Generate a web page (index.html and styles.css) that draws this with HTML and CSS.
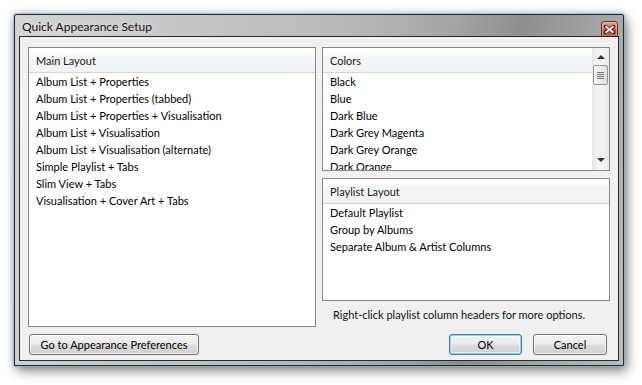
FILE: index.html
```html
<!DOCTYPE html>
<html>
<head>
<meta charset="utf-8">
<title>Quick Appearance Setup</title>
<link rel="stylesheet" href="styles.css">
</head>
<body>
<div class="window">
  <div class="titlebar">
    <span class="title">Quick Appearance Setup</span>
    <span class="close">
      <svg width="11" height="9" viewBox="0 0 11 9"><path d="M1 1 L10 8 M10 1 L1 8" stroke="#3a1a14" stroke-width="3.4" stroke-linecap="square"/><path d="M1.5 1.2 L9.5 7.8 M9.5 1.2 L1.5 7.8" stroke="#fff" stroke-width="1.8"/></svg>
    </span>
  </div>
  <div class="client">
    <div class="panel main">
      <div class="panel-head">Main Layout</div>
      <ul class="items">
        <li>Album List + Properties</li>
        <li>Album List + Properties (tabbed)</li>
        <li>Album List + Properties + Visualisation</li>
        <li>Album List + Visualisation</li>
        <li>Album List + Visualisation (alternate)</li>
        <li>Simple Playlist + Tabs</li>
        <li>Slim View + Tabs</li>
        <li>Visualisation + Cover Art + Tabs</li>
      </ul>
    </div>
    <div class="right">
      <div class="panel colors">
        <div class="panel-body">
          <div class="panel-head">Colors</div>
          <ul class="items">
            <li>Black</li>
            <li>Blue</li>
            <li>Dark Blue</li>
            <li>Dark Grey Magenta</li>
            <li>Dark Grey Orange</li>
            <li>Dark Orange</li>
          </ul>
        </div>
        <div class="scrollbar">
          <span class="arrow up"></span>
          <span class="thumb"><i></i><i></i><i></i><i></i></span>
          <span class="arrow down"></span>
        </div>
      </div>
      <div class="panel playlist">
        <div class="panel-head">Playlist Layout</div>
        <ul class="items">
          <li>Default Playlist</li>
          <li>Group by Albums</li>
          <li>Separate Album &amp; Artist Columns</li>
        </ul>
      </div>
      <p class="hint">Right-click playlist column headers for more options.</p>
    </div>
    <div class="footer-left">
      <button class="btn prefs">Go to Appearance Preferences</button>
    </div>
    <div class="footer-right">
      <button class="btn ok">OK</button>
      <button class="btn cancel">Cancel</button>
    </div>
  </div>
</div>
</body>
</html>
```
FILE: styles.css
```css
* { box-sizing: border-box; }
html, body { margin: 0; padding: 0; }
body {
  width: 642px;
  height: 385px;
  background: #fff;
  font-family: Lato, "Liberation Sans", sans-serif;
  font-size: 11px;
  color: #000;
  overflow: hidden;
}
.window {
  margin: 14px 0 0 14px;
  width: 610px;
  height: 352px;
  border: 1px solid #1e2a30;
  border-radius: 2px 2px 0 0;
  padding: 0 4px 4px 4px;
  background: linear-gradient(100deg, #d4d4d4 0%, #c6c6c6 25%, #b9b9b9 50%, #a4a4a4 66%, #8e8e8e 76%, #a9a9a9 90%, #bcbcbc 100%);
  box-shadow: 0 0 0 1px rgba(110, 200, 225, 0.55), 3px 5px 12px rgba(0, 0, 0, 0.45), 0 0 8px rgba(0, 0, 0, 0.25);
  display: flex;
  flex-direction: column;
}
.titlebar {
  height: 21px;
  display: flex;
  align-items: center;
  justify-content: space-between;
  padding: 0 1px 0 3px;
}
.title {
  font-size: 12px;
  color: #111;
  text-shadow: 0 0 6px rgba(255, 255, 255, 0.8);
  padding-top: 1px;
}
.close {
  width: 17px;
  height: 17px;
  margin-top: 8px;
  border: 1px solid #6a2c20;
  border-radius: 3px;
  background: linear-gradient(#e8a08a 0%, #d8735a 45%, #c4472c 55%, #d2684a 100%);
  box-shadow: inset 0 0 0 1px rgba(255, 220, 200, 0.5);
  display: flex;
  align-items: center;
  justify-content: center;
}
.client {
  flex: 1;
  border: 1px solid #2a2a2a;
  background: #f0f0f0;
  padding: 10px 8px 5px 8px;
  display: grid;
  grid-template-columns: 288px 288px;
  grid-template-rows: 280px 21px;
  column-gap: 6px;
  row-gap: 7px;
}
.panel {
  border: 1px solid #828790;
  background: #fff;
}
.panel-head {
  height: 25px;
  line-height: 25px;
  padding-left: 7px;
  border-bottom: 1px solid #d5d5d5;
  background: linear-gradient(#ffffff 0%, #ffffff 20%, #f5f6f7 30%, #f1f2f4 100%);
  color: #1a1a1a;
}
.items {
  list-style: none;
  margin: 0;
  padding: 0;
}
.items li {
  height: 17px;
  line-height: 18px;
  padding-left: 7px;
  white-space: nowrap;
}
.right {
  display: flex;
  flex-direction: column;
}
.colors {
  height: 124px;
  display: flex;
  overflow: hidden;
}
.panel-body {
  flex: 1;
  overflow: hidden;
}
.scrollbar {
  width: 17px;
  background: linear-gradient(90deg, #e6e6e6 0%, #f3f3f3 30%, #f3f3f3 70%, #e9e9e9 100%);
  display: flex;
  flex-direction: column;
  align-items: center;
}
.arrow {
  width: 0;
  height: 0;
  border-left: 4px solid transparent;
  border-right: 4px solid transparent;
}
.arrow.up {
  margin-top: 7px;
  border-bottom: 4px solid #333;
}
.arrow.down {
  margin-top: auto;
  margin-bottom: 8px;
  border-top: 4px solid #333;
}
.thumb {
  margin-top: 6px;
  width: 15px;
  height: 20px;
  border: 1px solid #959595;
  border-radius: 2px;
  background: linear-gradient(90deg, #f4f4f4 0%, #ececec 50%, #dcdcdc 100%);
  display: flex;
  flex-direction: column;
  align-items: center;
  justify-content: center;
  gap: 1px;
}
.thumb i {
  display: block;
  width: 7px;
  height: 1px;
  background: #777;
}
.playlist {
  margin-top: 7px;
  height: 123px;
}
.hint {
  margin: 0;
  padding: 5px 0 0 11px;
  height: 26px;
  line-height: 18px;
  color: #111;
  white-space: nowrap;
}
.footer-left {
  display: flex;
  padding-left: 1px;
}
.footer-right {
  display: flex;
  justify-content: flex-end;
  gap: 11px;
  padding-right: 3px;
}
.btn {
  font: inherit;
  color: #000;
  height: 21px;
  margin: 0;
  padding: 0;
  border: 1px solid #707070;
  border-radius: 3px;
  background: linear-gradient(#f2f2f2 0%, #ebebeb 48%, #dddddd 52%, #cfcfcf 100%);
  box-shadow: inset 0 0 0 1px rgba(255, 255, 255, 0.7);
  line-height: 18px;
  white-space: nowrap;
}
.prefs { width: 170px; }
.ok {
  width: 73px;
  border-color: #3c7fb1;
  box-shadow: inset 0 0 0 1px #8fd2f0, inset 0 0 0 2px rgba(255, 255, 255, 0.5);
}
.cancel { width: 74px; }
```
